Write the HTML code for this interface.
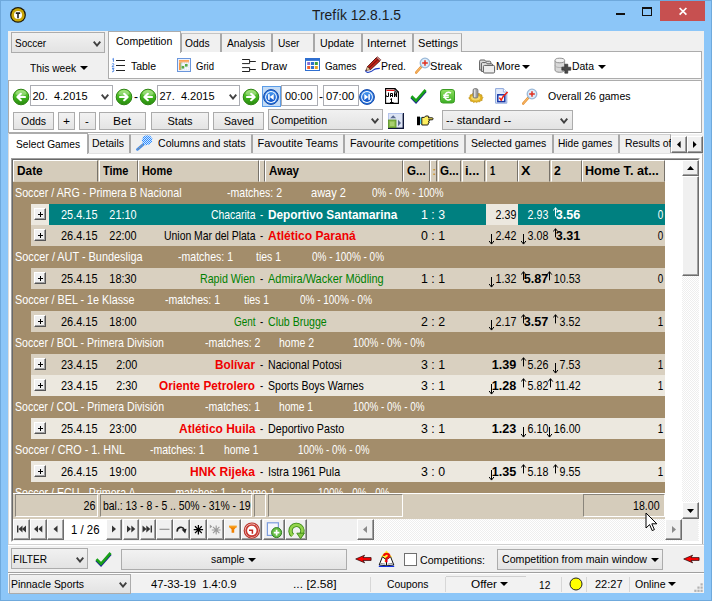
<!DOCTYPE html>
<html><head><meta charset="utf-8"><title>Trefik</title>
<style>
html,body{margin:0;padding:0;}
body{width:712px;height:601px;overflow:hidden;position:relative;background:#8cc6f8;font-family:"Liberation Sans",sans-serif;font-size:11px;}
div{position:absolute;box-sizing:border-box;}
.t{white-space:pre;}
.btn{background:linear-gradient(#f2f2f2,#e4e4e4);border:1px solid #acacac;}
.cmb{background:linear-gradient(#f1f1f1,#e3e3e3);border:1px solid #acacac;}
.wbox{background:#fff;border:1px solid #abadb3;}
.tab{background:#f0f0f0;border:1px solid #d0d0d0;border-bottom:none;}
.hc{background:#d5ccbb;border-left:1px solid #fff;border-top:1px solid #fff;border-right:1px solid #77726a;border-bottom:1px solid #cfc5b2;}
.fc{background:#d5ccbb;border-left:1px solid #8a857b;border-top:1px solid #8a857b;border-right:1px solid #fff;border-bottom:1px solid #fff;}
.nb{background:#f0f0f0;border-left:1px solid #fff;border-top:1px solid #fff;border-right:1px solid #6d6d6d;border-bottom:1px solid #6d6d6d;box-shadow:inset -1px -1px 0 #a0a0a0;}
.pm{background:#f0f0f0;border-left:1px solid #fff;border-top:1px solid #fff;border-right:1px solid #555;border-bottom:1px solid #555;box-shadow:inset -1px -1px 0 #a0a0a0;}
</style></head><body>
<div style="left:0px;top:0px;width:712px;height:601px;background:#8cc6f8;border:1px solid #6fa9dc;"></div>
<div style="left:8px;top:31px;width:696px;height:562px;background:#f0f0f0;"></div>
<div class="t" style="top:7.29px;font-size:15px;line-height:16.75px;color:#1c1c1c;white-space:pre;left:312px;transform-origin:0 50%;transform:scaleX(0.9254);">Trefík 12.8.1.5</div>
<svg style="position:absolute;left:9px;top:6px" width="18" height="18" viewBox="0 0 18 18"><circle cx="9" cy="8.9" r="7.9" fill="#1a1608"/><circle cx="9" cy="8.9" r="6.7" fill="#ccaa08"/><circle cx="9" cy="8.9" r="5.4" fill="#c09c08" opacity=".5"/><circle cx="9" cy="8.9" r="4" fill="#fff"/><path d="M6.8 6.2h4.4v1.7h-1.4v4.4h-1.6v-4.4h-1.4z" fill="#222"/></svg>
<div style="left:660px;top:1px;width:45px;height:20px;background:#c75050;"></div>
<svg style="position:absolute;left:678px;top:6px" width="10" height="10" viewBox="0 0 10 10"><path d="M1.6 2l6.8 6.6M8.4 2l-6.8 6.6" stroke="#fff" stroke-width="1.7" fill="none"/></svg>
<div style="left:616px;top:13px;width:9px;height:2px;background:#111;"></div>
<div style="left:642px;top:7px;width:10px;height:9px;border:1px solid #111;border-top:2px solid #111;"></div>
<div class="cmb" style="left:11px;top:32px;width:94px;height:21px"></div>
<div class="t" style="top:36.98px;font-size:11px;line-height:12.29px;color:#000;white-space:pre;left:14.5px;transform-origin:0 50%;transform:scaleX(0.9114);">Soccer</div>
<svg style="position:absolute;left:93px;top:40.5px" width="8" height="6" viewBox="0 0 8 6"><path d="M0.7 0.7L4 4.6L7.3 0.7" stroke="#404040" stroke-width="1.9" fill="none"/></svg>
<div class="t" style="top:62.28px;font-size:11px;line-height:12.29px;color:#000;white-space:pre;left:30px;transform-origin:0 50%;transform:scaleX(0.9290);">This week</div>
<svg style="position:absolute;left:79.5px;top:66px" width="8" height="4" viewBox="0 0 8 4"><path d="M0 0h8L4 4z" fill="#000"/></svg>
<div style="left:108px;top:51px;width:594px;height:28px;background:#fff;border:1px solid #acacac"></div>
<div class="tab" style="left:181px;top:33px;width:40px;height:18.5px;border-color:#c4c4c4 #a8a8a8"></div>
<div class="t" style="top:36.98px;font-size:11px;line-height:12.29px;color:#000;white-space:pre;left:184.5px;transform-origin:0 50%;transform:scaleX(0.9319);">Odds</div>
<div class="tab" style="left:221px;top:33px;width:50.5px;height:18.5px;border-color:#c4c4c4 #a8a8a8"></div>
<div class="t" style="top:36.98px;font-size:11px;line-height:12.29px;color:#000;white-space:pre;left:226.75px;transform-origin:0 50%;transform:scaleX(0.9338);">Analysis</div>
<div class="tab" style="left:271.5px;top:33px;width:42.5px;height:18.5px;border-color:#c4c4c4 #a8a8a8"></div>
<div class="t" style="top:36.98px;font-size:11px;line-height:12.29px;color:#000;white-space:pre;left:277.5px;transform-origin:0 50%;transform:scaleX(0.9257);">User</div>
<div class="tab" style="left:314px;top:33px;width:47.5px;height:18.5px;border-color:#c4c4c4 #a8a8a8"></div>
<div class="t" style="top:36.98px;font-size:11px;line-height:12.29px;color:#000;white-space:pre;left:319.5px;transform-origin:0 50%;transform:scaleX(0.9656);">Update</div>
<div class="tab" style="left:361.5px;top:33px;width:51.5px;height:18.5px;border-color:#c4c4c4 #a8a8a8"></div>
<div class="t" style="top:36.98px;font-size:11px;line-height:12.29px;color:#000;white-space:pre;left:367px;transform-origin:0 50%;transform:scaleX(1.0457);">Internet</div>
<div class="tab" style="left:413px;top:33px;width:49px;height:18.5px;border-color:#c4c4c4 #a8a8a8"></div>
<div class="t" style="top:36.98px;font-size:11px;line-height:12.29px;color:#000;white-space:pre;left:418px;transform-origin:0 50%;transform:scaleX(1.0065);">Settings</div>
<div style="left:108px;top:31px;width:73px;height:22px;background:#fff;border:1px solid #acacac;border-bottom:none"></div>
<div class="t" style="top:34.98px;font-size:11px;line-height:12.29px;color:#000;white-space:pre;left:115.75px;transform-origin:0 50%;transform:scaleX(0.9583);">Competition</div>
<div class="t" style="top:59.98px;font-size:11px;line-height:12.29px;color:#000;white-space:pre;left:130.5px;transform-origin:0 50%;transform:scaleX(0.9507);">Table</div>
<div class="t" style="top:59.98px;font-size:11px;line-height:12.29px;color:#000;white-space:pre;left:195.75px;transform-origin:0 50%;transform:scaleX(0.8662);">Grid</div>
<div class="t" style="top:59.98px;font-size:11px;line-height:12.29px;color:#000;white-space:pre;left:261px;transform-origin:0 50%;transform:scaleX(1.0128);">Draw</div>
<div class="t" style="top:59.98px;font-size:11px;line-height:12.29px;color:#000;white-space:pre;left:324.5px;transform-origin:0 50%;transform:scaleX(0.8885);">Games</div>
<div class="t" style="top:59.98px;font-size:11px;line-height:12.29px;color:#000;white-space:pre;left:380.75px;transform-origin:0 50%;transform:scaleX(0.9510);">Pred.</div>
<div class="t" style="top:59.98px;font-size:11px;line-height:12.29px;color:#000;white-space:pre;left:430px;transform-origin:0 50%;transform:scaleX(1.0066);">Streak</div>
<div class="t" style="top:59.98px;font-size:11px;line-height:12.29px;color:#000;white-space:pre;left:495.5px;transform-origin:0 50%;transform:scaleX(0.9576);">More</div>
<div class="t" style="top:59.98px;font-size:11px;line-height:12.29px;color:#000;white-space:pre;left:571.75px;transform-origin:0 50%;transform:scaleX(0.9469);">Data</div>
<svg style="position:absolute;left:522px;top:64.5px" width="8" height="4" viewBox="0 0 8 4"><path d="M0 0h8L4 4z" fill="#000"/></svg>
<svg style="position:absolute;left:597.5px;top:64.5px" width="8" height="4" viewBox="0 0 8 4"><path d="M0 0h8L4 4z" fill="#000"/></svg>
<div style="left:8px;top:80px;width:694px;height:53px;background:#fff;border:1px solid #acacac"></div>
<div class="wbox" style="left:30px;top:85px;width:82.5px;height:21px"></div>
<div class="t" style="top:90.48px;font-size:11px;line-height:12.29px;color:#000;white-space:pre;left:32.5px;transform-origin:0 50%;">20.  4.2015</div>
<svg style="position:absolute;left:101px;top:94px" width="8" height="6" viewBox="0 0 8 6"><path d="M0.7 0.7L4 4.6L7.3 0.7" stroke="#444" stroke-width="1.9" fill="none"/></svg>
<div class="wbox" style="left:157px;top:85px;width:83px;height:21px"></div>
<div class="t" style="top:90.48px;font-size:11px;line-height:12.29px;color:#000;white-space:pre;left:159.5px;transform-origin:0 50%;">27.  4.2015</div>
<svg style="position:absolute;left:229px;top:94px" width="8" height="6" viewBox="0 0 8 6"><path d="M0.7 0.7L4 4.6L7.3 0.7" stroke="#444" stroke-width="1.9" fill="none"/></svg>
<div class="t" style="top:90.94px;font-size:12px;line-height:13.40px;color:#000;white-space:pre;left:134px;transform-origin:0 50%;">-</div>
<div class="wbox" style="left:281px;top:85px;width:36.5px;height:21px"></div>
<div class="t" style="top:90.48px;font-size:11px;line-height:12.29px;color:#000;white-space:pre;left:285px;transform-origin:0 50%;">00:00</div>
<div class="t" style="top:90.94px;font-size:12px;line-height:13.40px;color:#000;white-space:pre;left:319px;transform-origin:0 50%;">-</div>
<div class="wbox" style="left:322.5px;top:85px;width:36.5px;height:21px"></div>
<div class="t" style="top:90.48px;font-size:11px;line-height:12.29px;color:#000;white-space:pre;left:325.5px;transform-origin:0 50%;transform:scaleX(1.0264);">07:00</div>
<div class="t" style="top:89.98px;font-size:11px;line-height:12.29px;color:#000;white-space:pre;left:547.75px;transform-origin:0 50%;transform:scaleX(0.9570);">Overall 26 games</div>
<div class="btn" style="left:12.5px;top:111.5px;width:41.0px;height:18.5px"></div>
<div class="t" style="top:115.28px;font-size:11px;line-height:12.29px;color:#000;white-space:pre;left:20.5px;transform-origin:0 50%;transform:scaleX(0.9510);">Odds</div>
<div class="btn" style="left:57.5px;top:111.5px;width:17.0px;height:18.5px"></div>
<div class="t" style="top:115.28px;font-size:11px;line-height:12.29px;color:#000;white-space:pre;left:62.5px;transform-origin:0 50%;transform:scaleX(1.0894);">+</div>
<div class="btn" style="left:78.5px;top:111.5px;width:17.0px;height:18.5px"></div>
<div class="t" style="top:115.28px;font-size:11px;line-height:12.29px;color:#000;white-space:pre;left:84.8px;transform-origin:0 50%;transform:scaleX(1.0371);">-</div>
<div class="btn" style="left:98.5px;top:111.5px;width:47.5px;height:18.5px"></div>
<div class="t" style="top:115.28px;font-size:11px;line-height:12.29px;color:#000;white-space:pre;left:113px;transform-origin:0 50%;transform:scaleX(1.0904);">Bet</div>
<div class="btn" style="left:151px;top:111.5px;width:58px;height:18.5px"></div>
<div class="t" style="top:115.28px;font-size:11px;line-height:12.29px;color:#000;white-space:pre;left:167.5px;transform-origin:0 50%;">Stats</div>
<div class="btn" style="left:213px;top:111.5px;width:50.5px;height:18.5px"></div>
<div class="t" style="top:115.28px;font-size:11px;line-height:12.29px;color:#000;white-space:pre;left:223.75px;transform-origin:0 50%;transform:scaleX(0.9619);">Saved</div>
<div class="cmb" style="left:267.5px;top:109px;width:115px;height:20.5px"></div>
<div class="t" style="top:114.18px;font-size:11px;line-height:12.29px;color:#000;white-space:pre;left:270.5px;transform-origin:0 50%;transform:scaleX(0.9541);">Competition</div>
<svg style="position:absolute;left:371px;top:117.5px" width="8" height="6" viewBox="0 0 8 6"><path d="M0.7 0.7L4 4.6L7.3 0.7" stroke="#404040" stroke-width="1.9" fill="none"/></svg>
<div class="cmb" style="left:442px;top:109.5px;width:130.5px;height:20px"></div>
<div class="t" style="top:114.18px;font-size:11px;line-height:12.29px;color:#000;white-space:pre;left:445.75px;transform-origin:0 50%;transform:scaleX(1.0264);">-- standard --</div>
<svg style="position:absolute;left:560px;top:117.5px" width="8" height="6" viewBox="0 0 8 6"><path d="M0.7 0.7L4 4.6L7.3 0.7" stroke="#404040" stroke-width="1.9" fill="none"/></svg>
<div class="tab" style="left:88px;top:134px;width:42px;height:19px;border-color:#cfcfcf #a8a8a8"></div>
<div class="t" style="top:136.98px;font-size:11px;line-height:12.29px;color:#000;white-space:pre;left:92px;transform-origin:0 50%;transform:scaleX(0.9517);">Details</div>
<div class="tab" style="left:130px;top:134px;width:121.5px;height:19px;border-color:#cfcfcf #a8a8a8"></div>
<div class="t" style="top:136.98px;font-size:11px;line-height:12.29px;color:#000;white-space:pre;left:157.5px;transform-origin:0 50%;transform:scaleX(0.9605);">Columns and stats</div>
<div class="tab" style="left:251.5px;top:134px;width:92.5px;height:19px;border-color:#cfcfcf #a8a8a8"></div>
<div class="t" style="top:136.98px;font-size:11px;line-height:12.29px;color:#000;white-space:pre;left:257.5px;transform-origin:0 50%;">Favoutite Teams</div>
<div class="tab" style="left:344px;top:134px;width:120.75px;height:19px;border-color:#cfcfcf #a8a8a8"></div>
<div class="t" style="top:136.98px;font-size:11px;line-height:12.29px;color:#000;white-space:pre;left:349.5px;transform-origin:0 50%;transform:scaleX(0.9828);">Favourite competitions</div>
<div class="tab" style="left:464.75px;top:134px;width:87.75px;height:19px;border-color:#cfcfcf #a8a8a8"></div>
<div class="t" style="top:136.98px;font-size:11px;line-height:12.29px;color:#000;white-space:pre;left:470.75px;transform-origin:0 50%;transform:scaleX(0.9540);">Selected games</div>
<div class="tab" style="left:552.5px;top:134px;width:66.75px;height:19px;border-color:#cfcfcf #a8a8a8"></div>
<div class="t" style="top:136.98px;font-size:11px;line-height:12.29px;color:#000;white-space:pre;left:557.75px;transform-origin:0 50%;transform:scaleX(0.9243);">Hide games</div>
<div class="tab" style="left:619.25px;top:134px;width:51.75px;height:19px;border-color:#cfcfcf #a8a8a8"></div>
<div style="left:619.5px;top:135px;width:51.5px;height:18px;overflow:hidden">
<div class="t" style="top:1.98px;font-size:11px;line-height:12.29px;color:#000;white-space:pre;left:5px;transform-origin:0 50%;transform:scaleX(0.9508);">Results of</div>
</div>
<div style="left:88px;top:133px;width:614px;height:1.2px;background:#fff;"></div>
<div style="left:8px;top:153px;width:695px;height:392px;background:#fff;border:1px solid #acacac;border-left:none;border-top-color:#e2e2e2"></div>
<div style="left:8px;top:133px;width:80px;height:21px;background:#fff;border:1px solid #acacac;border-bottom:none;border-left:none"></div>
<div class="t" style="top:138.48px;font-size:11px;line-height:12.29px;color:#000;white-space:pre;left:15.5px;transform-origin:0 50%;transform:scaleX(0.9265);">Select Games</div>
<div style="left:8px;top:133px;width:1px;height:412px;background:#dcdcdc;"></div>
<div class="nb" style="left:671px;top:136px;width:16px;height:17px"></div>
<div class="nb" style="left:687px;top:136px;width:16px;height:17px"></div>
<svg style="position:absolute;left:677.3px;top:141px" width="4" height="7" viewBox="0 0 4 7"><path d="M3.6 0v7L0 3.5z" fill="#000"/></svg>
<svg style="position:absolute;left:693.3px;top:141px" width="4" height="7" viewBox="0 0 4 7"><path d="M0 0v7L3.6 3.5z" fill="#000"/></svg>
<div style="left:11px;top:158px;width:689px;height:384px;background:#fff;border:1px solid #a0a0a0;border-right-color:#fff;border-bottom-color:#fff"></div>
<div style="left:12px;top:159px;width:687px;height:382px;background:#fff;border:1px solid #696969;border-right-color:#e3e3e3;border-bottom-color:#e3e3e3"></div>
<div style="left:13px;top:160px;width:652px;height:334px;background:#a38d6b;"></div>
<div style="left:13px;top:160px;width:652px;height:21.5px;background:#d5ccbb;"></div>
<div class="hc" style="left:13px;top:160px;width:85px;height:21.5px"></div>
<div class="hc" style="left:98.5px;top:160px;width:39.0px;height:21.5px"></div>
<div class="hc" style="left:138px;top:160px;width:120.5px;height:21.5px"></div>
<div class="hc" style="left:259px;top:160px;width:5.5px;height:21.5px"></div>
<div class="hc" style="left:265px;top:160px;width:137.5px;height:21.5px"></div>
<div class="hc" style="left:403px;top:160px;width:26.5px;height:21.5px"></div>
<div class="hc" style="left:430px;top:160px;width:7px;height:21.5px"></div>
<div class="hc" style="left:437.5px;top:160px;width:23.5px;height:21.5px"></div>
<div class="hc" style="left:461.5px;top:160px;width:23.5px;height:21.5px"></div>
<div class="hc" style="left:485.5px;top:160px;width:32.0px;height:21.5px"></div>
<div class="hc" style="left:518px;top:160px;width:32px;height:21.5px"></div>
<div class="hc" style="left:550.5px;top:160px;width:31.0px;height:21.5px"></div>
<div class="hc" style="left:582px;top:160px;width:83px;height:21.5px"></div>
<div class="t" style="top:164.74px;font-size:12px;line-height:13.40px;color:#000;white-space:pre;font-weight:bold;left:16.7px;transform-origin:0 50%;transform:scaleX(0.9879);">Date</div>
<div class="t" style="top:164.74px;font-size:12px;line-height:13.40px;color:#000;white-space:pre;font-weight:bold;left:102.8px;transform-origin:0 50%;transform:scaleX(0.9136);">Time</div>
<div class="t" style="top:164.74px;font-size:12px;line-height:13.40px;color:#000;white-space:pre;font-weight:bold;left:142px;transform-origin:0 50%;transform:scaleX(0.9086);">Home</div>
<div class="t" style="top:164.74px;font-size:12px;line-height:13.40px;color:#000;white-space:pre;font-weight:bold;left:268.5px;transform-origin:0 50%;transform:scaleX(0.9634);">Away</div>
<div class="t" style="top:164.74px;font-size:12px;line-height:13.40px;color:#000;white-space:pre;font-weight:bold;left:407.2px;transform-origin:0 50%;transform:scaleX(0.9667);">G...</div>
<div class="t" style="top:164.98px;font-size:11px;line-height:12.29px;color:#c89030;white-space:pre;font-weight:bold;left:432.5px;transform-origin:0 50%;">:</div>
<div class="t" style="top:164.74px;font-size:12px;line-height:13.40px;color:#000;white-space:pre;font-weight:bold;left:440.2px;transform-origin:0 50%;transform:scaleX(0.9667);">G...</div>
<div class="t" style="top:164.74px;font-size:12px;line-height:13.40px;color:#000;white-space:pre;font-weight:bold;left:465.2px;transform-origin:0 50%;transform:scaleX(1.0792);">i...</div>
<div class="t" style="top:164.74px;font-size:12px;line-height:13.40px;color:#000;white-space:pre;font-weight:bold;left:490.4px;transform-origin:0 50%;transform:scaleX(0.7789);">1</div>
<div class="t" style="top:164.74px;font-size:12px;line-height:13.40px;color:#000;white-space:pre;font-weight:bold;left:520.9px;transform-origin:0 50%;transform:scaleX(1.1744);">X</div>
<div class="t" style="top:164.74px;font-size:12px;line-height:13.40px;color:#000;white-space:pre;font-weight:bold;left:553.5px;transform-origin:0 50%;transform:scaleX(1.0186);">2</div>
<div class="t" style="top:164.74px;font-size:12px;line-height:13.40px;color:#000;white-space:pre;font-weight:bold;left:585.3px;transform-origin:0 50%;transform:scaleX(1.0523);">Home T. at...</div>
<div class="t" style="top:186.39px;font-size:13px;line-height:14.52px;color:#ffffff;white-space:pre;left:15px;transform-origin:0 50%;transform:scaleX(0.8231);">Soccer / ARG - Primera B Nacional</div>
<div class="t" style="top:186.39px;font-size:13px;line-height:14.52px;color:#ffffff;white-space:pre;left:226.5px;transform-origin:0 50%;transform:scaleX(0.8098);">-matches: 2</div>
<div class="t" style="top:186.39px;font-size:13px;line-height:14.52px;color:#ffffff;white-space:pre;left:311px;transform-origin:0 50%;transform:scaleX(0.8497);">away 2</div>
<div class="t" style="top:186.39px;font-size:13px;line-height:14.52px;color:#ffffff;white-space:pre;left:372px;transform-origin:0 50%;transform:scaleX(0.7611);">0% - 0% - 100%</div>
<div style="left:31px;top:204px;width:634px;height:21px;background:#d9d0c0;"></div>
<div style="left:31px;top:204px;width:18px;height:21px;background:#ece8df;"></div>
<div style="left:49px;top:204px;width:616px;height:21px;background:#008080;"></div>
<div style="left:486px;top:204px;width:32px;height:21px;background:#ece8df;"></div>
<div class="pm" style="left:34px;top:208px;width:12px;height:12px"></div>
<div style="left:37.5px;top:213.5px;width:5px;height:1px;background:#000;"></div>
<div style="left:39.5px;top:211.5px;width:1px;height:5px;background:#000;"></div>
<div class="t" style="top:208.39px;font-size:13px;line-height:14.52px;color:#fff;white-space:pre;left:61px;transform-origin:0 50%;transform:scaleX(0.8414);">25.4.15</div>
<div class="t" style="top:208.39px;font-size:13px;line-height:14.52px;color:#fff;white-space:pre;right:575.2px;transform-origin:100% 50%;transform:scaleX(0.8350);">21:10</div>
<div class="t" style="top:208.39px;font-size:13px;line-height:14.52px;color:#fff;white-space:pre;left:210.5px;transform-origin:0 50%;transform:scaleX(0.7998);">Chacarita</div>
<div class="t" style="top:208.39px;font-size:13px;line-height:14.52px;color:#fff;white-space:pre;left:259.6px;transform-origin:0 50%;transform:scaleX(0.7394);">-</div>
<div class="t" style="top:208.39px;font-size:13px;line-height:14.52px;color:#fff;white-space:pre;font-weight:bold;left:267.8px;transform-origin:0 50%;transform:scaleX(0.9078);">Deportivo Santamarina</div>
<div class="t" style="top:208.39px;font-size:13px;line-height:14.52px;color:#fff;white-space:pre;left:421px;transform-origin:0 50%;transform:scaleX(0.9486);">1 : 3</div>
<div class="t" style="top:208.39px;font-size:13px;line-height:14.52px;color:#000;white-space:pre;right:195.5px;transform-origin:100% 50%;transform:scaleX(0.8200);">2.39</div>
<div class="t" style="top:208.39px;font-size:13px;line-height:14.52px;color:#fff;white-space:pre;right:164px;transform-origin:100% 50%;transform:scaleX(0.8200);">2.93</div>
<div class="t" style="top:208.39px;font-size:13px;line-height:14.52px;color:#fff;white-space:pre;font-weight:bold;right:131.5px;transform-origin:100% 50%;transform:scaleX(0.9700);">3.56</div>
<svg style="position:absolute;left:553px;top:207px" width="6" height="10" viewBox="0 0 6 10"><path d="M2.5 9.4V0.8M0.2 3.6L2.5 0.7L4.8 3.6" stroke="#fff" stroke-width="1" fill="none"/></svg>
<div class="t" style="top:208.39px;font-size:13px;line-height:14.52px;color:#fff;white-space:pre;right:49.200000000000045px;transform-origin:100% 50%;transform:scaleX(0.7607);">0</div>
<div style="left:31px;top:225px;width:634px;height:21px;background:#d9d0c0;"></div>
<div class="pm" style="left:34px;top:229px;width:12px;height:12px"></div>
<div style="left:37.5px;top:234.5px;width:5px;height:1px;background:#000;"></div>
<div style="left:39.5px;top:232.5px;width:1px;height:5px;background:#000;"></div>
<div class="t" style="top:229.39px;font-size:13px;line-height:14.52px;color:#000;white-space:pre;left:61px;transform-origin:0 50%;transform:scaleX(0.8414);">26.4.15</div>
<div class="t" style="top:229.39px;font-size:13px;line-height:14.52px;color:#000;white-space:pre;right:575.2px;transform-origin:100% 50%;transform:scaleX(0.8350);">22:00</div>
<div class="t" style="top:229.39px;font-size:13px;line-height:14.52px;color:#000;white-space:pre;left:163.5px;transform-origin:0 50%;transform:scaleX(0.8014);">Union Mar del Plata</div>
<div class="t" style="top:229.39px;font-size:13px;line-height:14.52px;color:#000;white-space:pre;left:259.6px;transform-origin:0 50%;transform:scaleX(0.7394);">-</div>
<div class="t" style="top:229.39px;font-size:13px;line-height:14.52px;color:#f00000;white-space:pre;font-weight:bold;left:267.8px;transform-origin:0 50%;transform:scaleX(0.9266);">Atlético Paraná</div>
<div class="t" style="top:229.39px;font-size:13px;line-height:14.52px;color:#000;white-space:pre;left:421px;transform-origin:0 50%;transform:scaleX(0.9486);">0 : 1</div>
<div class="t" style="top:229.39px;font-size:13px;line-height:14.52px;color:#000;white-space:pre;right:195.5px;transform-origin:100% 50%;transform:scaleX(0.8200);">2.42</div>
<svg style="position:absolute;left:489px;top:234px" width="6" height="11" viewBox="0 0 6 11"><path d="M2.5 0V9.8M0.1 7L2.5 10.1L4.9 7" stroke="#000" stroke-width="1" fill="none"/></svg>
<div class="t" style="top:229.39px;font-size:13px;line-height:14.52px;color:#000;white-space:pre;right:164px;transform-origin:100% 50%;transform:scaleX(0.8200);">3.08</div>
<svg style="position:absolute;left:521px;top:234px" width="6" height="11" viewBox="0 0 6 11"><path d="M2.5 0V9.8M0.1 7L2.5 10.1L4.9 7" stroke="#000" stroke-width="1" fill="none"/></svg>
<div class="t" style="top:229.39px;font-size:13px;line-height:14.52px;color:#000;white-space:pre;font-weight:bold;right:131.5px;transform-origin:100% 50%;transform:scaleX(0.9700);">3.31</div>
<svg style="position:absolute;left:553px;top:228px" width="6" height="10" viewBox="0 0 6 10"><path d="M2.5 9.4V0.8M0.2 3.6L2.5 0.7L4.8 3.6" stroke="#000" stroke-width="1" fill="none"/></svg>
<div class="t" style="top:229.39px;font-size:13px;line-height:14.52px;color:#000;white-space:pre;right:49.200000000000045px;transform-origin:100% 50%;transform:scaleX(0.7607);">0</div>
<div class="t" style="top:250.39px;font-size:13px;line-height:14.52px;color:#ffffff;white-space:pre;left:15px;transform-origin:0 50%;transform:scaleX(0.8375);">Soccer / AUT - Bundesliga</div>
<div class="t" style="top:250.39px;font-size:13px;line-height:14.52px;color:#ffffff;white-space:pre;left:177.5px;transform-origin:0 50%;transform:scaleX(0.8098);">-matches: 1</div>
<div class="t" style="top:250.39px;font-size:13px;line-height:14.52px;color:#ffffff;white-space:pre;left:256px;transform-origin:0 50%;transform:scaleX(0.8045);">ties 1</div>
<div class="t" style="top:250.39px;font-size:13px;line-height:14.52px;color:#ffffff;white-space:pre;left:311.5px;transform-origin:0 50%;transform:scaleX(0.7665);">0% - 100% - 0%</div>
<div style="left:31px;top:268px;width:634px;height:21px;background:#d9d0c0;"></div>
<div class="pm" style="left:34px;top:272px;width:12px;height:12px"></div>
<div style="left:37.5px;top:277.5px;width:5px;height:1px;background:#000;"></div>
<div style="left:39.5px;top:275.5px;width:1px;height:5px;background:#000;"></div>
<div class="t" style="top:272.39px;font-size:13px;line-height:14.52px;color:#000;white-space:pre;left:61px;transform-origin:0 50%;transform:scaleX(0.8414);">25.4.15</div>
<div class="t" style="top:272.39px;font-size:13px;line-height:14.52px;color:#000;white-space:pre;right:575.2px;transform-origin:100% 50%;transform:scaleX(0.8350);">18:30</div>
<div class="t" style="top:272.39px;font-size:13px;line-height:14.52px;color:#008000;white-space:pre;left:200px;transform-origin:0 50%;transform:scaleX(0.8185);">Rapid Wien</div>
<div class="t" style="top:272.39px;font-size:13px;line-height:14.52px;color:#000;white-space:pre;left:259.6px;transform-origin:0 50%;transform:scaleX(0.7394);">-</div>
<div class="t" style="top:272.39px;font-size:13px;line-height:14.52px;color:#008000;white-space:pre;left:267.8px;transform-origin:0 50%;transform:scaleX(0.8414);">Admira/Wacker Mödling</div>
<div class="t" style="top:272.39px;font-size:13px;line-height:14.52px;color:#000;white-space:pre;left:421px;transform-origin:0 50%;transform:scaleX(0.9486);">1 : 1</div>
<div class="t" style="top:272.39px;font-size:13px;line-height:14.52px;color:#000;white-space:pre;right:195.5px;transform-origin:100% 50%;transform:scaleX(0.8200);">1.32</div>
<svg style="position:absolute;left:489px;top:277px" width="6" height="11" viewBox="0 0 6 11"><path d="M2.5 0V9.8M0.1 7L2.5 10.1L4.9 7" stroke="#000" stroke-width="1" fill="none"/></svg>
<div class="t" style="top:272.39px;font-size:13px;line-height:14.52px;color:#000;white-space:pre;font-weight:bold;right:164px;transform-origin:100% 50%;transform:scaleX(0.9700);">5.87</div>
<svg style="position:absolute;left:521px;top:271px" width="6" height="10" viewBox="0 0 6 10"><path d="M2.5 9.4V0.8M0.2 3.6L2.5 0.7L4.8 3.6" stroke="#000" stroke-width="1" fill="none"/></svg>
<div class="t" style="top:272.39px;font-size:13px;line-height:14.52px;color:#000;white-space:pre;right:131.5px;transform-origin:100% 50%;transform:scaleX(0.8200);">10.53</div>
<svg style="position:absolute;left:547px;top:271px" width="6" height="10" viewBox="0 0 6 10"><path d="M2.5 9.4V0.8M0.2 3.6L2.5 0.7L4.8 3.6" stroke="#000" stroke-width="1" fill="none"/></svg>
<div class="t" style="top:272.39px;font-size:13px;line-height:14.52px;color:#000;white-space:pre;right:49.200000000000045px;transform-origin:100% 50%;transform:scaleX(0.7607);">0</div>
<div class="t" style="top:293.39px;font-size:13px;line-height:14.52px;color:#ffffff;white-space:pre;left:15px;transform-origin:0 50%;transform:scaleX(0.8296);">Soccer / BEL - 1e Klasse</div>
<div class="t" style="top:293.39px;font-size:13px;line-height:14.52px;color:#ffffff;white-space:pre;left:165px;transform-origin:0 50%;transform:scaleX(0.8098);">-matches: 1</div>
<div class="t" style="top:293.39px;font-size:13px;line-height:14.52px;color:#ffffff;white-space:pre;left:244px;transform-origin:0 50%;transform:scaleX(0.8045);">ties 1</div>
<div class="t" style="top:293.39px;font-size:13px;line-height:14.52px;color:#ffffff;white-space:pre;left:300px;transform-origin:0 50%;transform:scaleX(0.7665);">0% - 100% - 0%</div>
<div style="left:31px;top:311px;width:634px;height:21px;background:#d9d0c0;"></div>
<div class="pm" style="left:34px;top:315px;width:12px;height:12px"></div>
<div style="left:37.5px;top:320.5px;width:5px;height:1px;background:#000;"></div>
<div style="left:39.5px;top:318.5px;width:1px;height:5px;background:#000;"></div>
<div class="t" style="top:315.39px;font-size:13px;line-height:14.52px;color:#000;white-space:pre;left:61px;transform-origin:0 50%;transform:scaleX(0.8414);">26.4.15</div>
<div class="t" style="top:315.39px;font-size:13px;line-height:14.52px;color:#000;white-space:pre;right:575.2px;transform-origin:100% 50%;transform:scaleX(0.8350);">18:00</div>
<div class="t" style="top:315.39px;font-size:13px;line-height:14.52px;color:#008000;white-space:pre;left:233.5px;transform-origin:0 50%;transform:scaleX(0.7627);">Gent</div>
<div class="t" style="top:315.39px;font-size:13px;line-height:14.52px;color:#000;white-space:pre;left:259.6px;transform-origin:0 50%;transform:scaleX(0.7394);">-</div>
<div class="t" style="top:315.39px;font-size:13px;line-height:14.52px;color:#008000;white-space:pre;left:267.8px;transform-origin:0 50%;transform:scaleX(0.8122);">Club Brugge</div>
<div class="t" style="top:315.39px;font-size:13px;line-height:14.52px;color:#000;white-space:pre;left:421px;transform-origin:0 50%;transform:scaleX(0.9486);">2 : 2</div>
<div class="t" style="top:315.39px;font-size:13px;line-height:14.52px;color:#000;white-space:pre;right:195.5px;transform-origin:100% 50%;transform:scaleX(0.8200);">2.17</div>
<svg style="position:absolute;left:489px;top:320px" width="6" height="11" viewBox="0 0 6 11"><path d="M2.5 0V9.8M0.1 7L2.5 10.1L4.9 7" stroke="#000" stroke-width="1" fill="none"/></svg>
<div class="t" style="top:315.39px;font-size:13px;line-height:14.52px;color:#000;white-space:pre;font-weight:bold;right:164px;transform-origin:100% 50%;transform:scaleX(0.9700);">3.57</div>
<svg style="position:absolute;left:521px;top:314px" width="6" height="10" viewBox="0 0 6 10"><path d="M2.5 9.4V0.8M0.2 3.6L2.5 0.7L4.8 3.6" stroke="#000" stroke-width="1" fill="none"/></svg>
<div class="t" style="top:315.39px;font-size:13px;line-height:14.52px;color:#000;white-space:pre;right:131.5px;transform-origin:100% 50%;transform:scaleX(0.8200);">3.52</div>
<svg style="position:absolute;left:553px;top:314px" width="6" height="10" viewBox="0 0 6 10"><path d="M2.5 9.4V0.8M0.2 3.6L2.5 0.7L4.8 3.6" stroke="#000" stroke-width="1" fill="none"/></svg>
<div class="t" style="top:315.39px;font-size:13px;line-height:14.52px;color:#000;white-space:pre;right:49.200000000000045px;transform-origin:100% 50%;transform:scaleX(0.7607);">1</div>
<div class="t" style="top:336.39px;font-size:13px;line-height:14.52px;color:#ffffff;white-space:pre;left:15px;transform-origin:0 50%;transform:scaleX(0.8141);">Soccer / BOL - Primera Division</div>
<div class="t" style="top:336.39px;font-size:13px;line-height:14.52px;color:#ffffff;white-space:pre;left:205px;transform-origin:0 50%;transform:scaleX(0.8172);">-matches: 2</div>
<div class="t" style="top:336.39px;font-size:13px;line-height:14.52px;color:#ffffff;white-space:pre;left:278.5px;transform-origin:0 50%;transform:scaleX(0.8071);">home 2</div>
<div class="t" style="top:336.39px;font-size:13px;line-height:14.52px;color:#ffffff;white-space:pre;left:353px;transform-origin:0 50%;transform:scaleX(0.7611);">100% - 0% - 0%</div>
<div style="left:31px;top:354px;width:634px;height:21px;background:#d9d0c0;"></div>
<div class="pm" style="left:34px;top:358px;width:12px;height:12px"></div>
<div style="left:37.5px;top:363.5px;width:5px;height:1px;background:#000;"></div>
<div style="left:39.5px;top:361.5px;width:1px;height:5px;background:#000;"></div>
<div class="t" style="top:358.39px;font-size:13px;line-height:14.52px;color:#000;white-space:pre;left:61px;transform-origin:0 50%;transform:scaleX(0.8414);">23.4.15</div>
<div class="t" style="top:358.39px;font-size:13px;line-height:14.52px;color:#000;white-space:pre;right:575.2px;transform-origin:100% 50%;transform:scaleX(0.8350);">2:00</div>
<div class="t" style="top:358.39px;font-size:13px;line-height:14.52px;color:#f00000;white-space:pre;font-weight:bold;left:215px;transform-origin:0 50%;transform:scaleX(0.9076);">Bolívar</div>
<div class="t" style="top:358.39px;font-size:13px;line-height:14.52px;color:#000;white-space:pre;left:259.6px;transform-origin:0 50%;transform:scaleX(0.7394);">-</div>
<div class="t" style="top:358.39px;font-size:13px;line-height:14.52px;color:#000;white-space:pre;left:267.8px;transform-origin:0 50%;transform:scaleX(0.8159);">Nacional Potosi</div>
<div class="t" style="top:358.39px;font-size:13px;line-height:14.52px;color:#000;white-space:pre;left:421px;transform-origin:0 50%;transform:scaleX(0.9486);">3 : 1</div>
<div class="t" style="top:358.39px;font-size:13px;line-height:14.52px;color:#000;white-space:pre;font-weight:bold;right:195.5px;transform-origin:100% 50%;transform:scaleX(0.9700);">1.39</div>
<div class="t" style="top:358.39px;font-size:13px;line-height:14.52px;color:#000;white-space:pre;right:164px;transform-origin:100% 50%;transform:scaleX(0.8200);">5.26</div>
<svg style="position:absolute;left:521px;top:357px" width="6" height="10" viewBox="0 0 6 10"><path d="M2.5 9.4V0.8M0.2 3.6L2.5 0.7L4.8 3.6" stroke="#000" stroke-width="1" fill="none"/></svg>
<div class="t" style="top:358.39px;font-size:13px;line-height:14.52px;color:#000;white-space:pre;right:131.5px;transform-origin:100% 50%;transform:scaleX(0.8200);">7.53</div>
<svg style="position:absolute;left:553px;top:363px" width="6" height="11" viewBox="0 0 6 11"><path d="M2.5 0V9.8M0.1 7L2.5 10.1L4.9 7" stroke="#000" stroke-width="1" fill="none"/></svg>
<div class="t" style="top:358.39px;font-size:13px;line-height:14.52px;color:#000;white-space:pre;right:49.200000000000045px;transform-origin:100% 50%;transform:scaleX(0.7607);">1</div>
<div style="left:31px;top:375px;width:634px;height:21px;background:#ece8df;"></div>
<div class="pm" style="left:34px;top:379px;width:12px;height:12px"></div>
<div style="left:37.5px;top:384.5px;width:5px;height:1px;background:#000;"></div>
<div style="left:39.5px;top:382.5px;width:1px;height:5px;background:#000;"></div>
<div class="t" style="top:379.39px;font-size:13px;line-height:14.52px;color:#000;white-space:pre;left:61px;transform-origin:0 50%;transform:scaleX(0.8414);">23.4.15</div>
<div class="t" style="top:379.39px;font-size:13px;line-height:14.52px;color:#000;white-space:pre;right:575.2px;transform-origin:100% 50%;transform:scaleX(0.8350);">2:30</div>
<div class="t" style="top:379.39px;font-size:13px;line-height:14.52px;color:#f00000;white-space:pre;font-weight:bold;left:159px;transform-origin:0 50%;transform:scaleX(0.9039);">Oriente Petrolero</div>
<div class="t" style="top:379.39px;font-size:13px;line-height:14.52px;color:#000;white-space:pre;left:259.6px;transform-origin:0 50%;transform:scaleX(0.7394);">-</div>
<div class="t" style="top:379.39px;font-size:13px;line-height:14.52px;color:#000;white-space:pre;left:267.8px;transform-origin:0 50%;transform:scaleX(0.8109);">Sports Boys Warnes</div>
<div class="t" style="top:379.39px;font-size:13px;line-height:14.52px;color:#000;white-space:pre;left:421px;transform-origin:0 50%;transform:scaleX(0.9486);">3 : 1</div>
<div class="t" style="top:379.39px;font-size:13px;line-height:14.52px;color:#000;white-space:pre;font-weight:bold;right:195.5px;transform-origin:100% 50%;transform:scaleX(0.9700);">1.28</div>
<svg style="position:absolute;left:489px;top:384px" width="6" height="11" viewBox="0 0 6 11"><path d="M2.5 0V9.8M0.1 7L2.5 10.1L4.9 7" stroke="#000" stroke-width="1" fill="none"/></svg>
<div class="t" style="top:379.39px;font-size:13px;line-height:14.52px;color:#000;white-space:pre;right:164px;transform-origin:100% 50%;transform:scaleX(0.8200);">5.82</div>
<svg style="position:absolute;left:521px;top:378px" width="6" height="10" viewBox="0 0 6 10"><path d="M2.5 9.4V0.8M0.2 3.6L2.5 0.7L4.8 3.6" stroke="#000" stroke-width="1" fill="none"/></svg>
<div class="t" style="top:379.39px;font-size:13px;line-height:14.52px;color:#000;white-space:pre;right:131.5px;transform-origin:100% 50%;transform:scaleX(0.8200);">11.42</div>
<svg style="position:absolute;left:548px;top:378px" width="6" height="10" viewBox="0 0 6 10"><path d="M2.5 9.4V0.8M0.2 3.6L2.5 0.7L4.8 3.6" stroke="#000" stroke-width="1" fill="none"/></svg>
<div class="t" style="top:379.39px;font-size:13px;line-height:14.52px;color:#000;white-space:pre;right:49.200000000000045px;transform-origin:100% 50%;transform:scaleX(0.7607);">1</div>
<div class="t" style="top:400.39px;font-size:13px;line-height:14.52px;color:#ffffff;white-space:pre;left:15px;transform-origin:0 50%;transform:scaleX(0.8110);">Soccer / COL - Primera División</div>
<div class="t" style="top:400.39px;font-size:13px;line-height:14.52px;color:#ffffff;white-space:pre;left:205px;transform-origin:0 50%;transform:scaleX(0.8098);">-matches: 1</div>
<div class="t" style="top:400.39px;font-size:13px;line-height:14.52px;color:#ffffff;white-space:pre;left:278.5px;transform-origin:0 50%;transform:scaleX(0.7841);">home 1</div>
<div class="t" style="top:400.39px;font-size:13px;line-height:14.52px;color:#ffffff;white-space:pre;left:353px;transform-origin:0 50%;transform:scaleX(0.7611);">100% - 0% - 0%</div>
<div style="left:31px;top:418px;width:634px;height:21px;background:#ece8df;"></div>
<div class="pm" style="left:34px;top:422px;width:12px;height:12px"></div>
<div style="left:37.5px;top:427.5px;width:5px;height:1px;background:#000;"></div>
<div style="left:39.5px;top:425.5px;width:1px;height:5px;background:#000;"></div>
<div class="t" style="top:422.39px;font-size:13px;line-height:14.52px;color:#000;white-space:pre;left:61px;transform-origin:0 50%;transform:scaleX(0.8414);">25.4.15</div>
<div class="t" style="top:422.39px;font-size:13px;line-height:14.52px;color:#000;white-space:pre;right:575.2px;transform-origin:100% 50%;transform:scaleX(0.8350);">23:00</div>
<div class="t" style="top:422.39px;font-size:13px;line-height:14.52px;color:#f00000;white-space:pre;font-weight:bold;left:178.5px;transform-origin:0 50%;transform:scaleX(0.9209);">Atlético Huila</div>
<div class="t" style="top:422.39px;font-size:13px;line-height:14.52px;color:#000;white-space:pre;left:259.6px;transform-origin:0 50%;transform:scaleX(0.7394);">-</div>
<div class="t" style="top:422.39px;font-size:13px;line-height:14.52px;color:#000;white-space:pre;left:267.8px;transform-origin:0 50%;transform:scaleX(0.8238);">Deportivo Pasto</div>
<div class="t" style="top:422.39px;font-size:13px;line-height:14.52px;color:#000;white-space:pre;left:421px;transform-origin:0 50%;transform:scaleX(0.9486);">3 : 1</div>
<div class="t" style="top:422.39px;font-size:13px;line-height:14.52px;color:#000;white-space:pre;font-weight:bold;right:195.5px;transform-origin:100% 50%;transform:scaleX(0.9700);">1.23</div>
<div class="t" style="top:422.39px;font-size:13px;line-height:14.52px;color:#000;white-space:pre;right:164px;transform-origin:100% 50%;transform:scaleX(0.8200);">6.10</div>
<svg style="position:absolute;left:521px;top:427px" width="6" height="11" viewBox="0 0 6 11"><path d="M2.5 0V9.8M0.1 7L2.5 10.1L4.9 7" stroke="#000" stroke-width="1" fill="none"/></svg>
<div class="t" style="top:422.39px;font-size:13px;line-height:14.52px;color:#000;white-space:pre;right:131.5px;transform-origin:100% 50%;transform:scaleX(0.8200);">16.00</div>
<svg style="position:absolute;left:547px;top:427px" width="6" height="11" viewBox="0 0 6 11"><path d="M2.5 0V9.8M0.1 7L2.5 10.1L4.9 7" stroke="#000" stroke-width="1" fill="none"/></svg>
<div class="t" style="top:422.39px;font-size:13px;line-height:14.52px;color:#000;white-space:pre;right:49.200000000000045px;transform-origin:100% 50%;transform:scaleX(0.7607);">1</div>
<div class="t" style="top:443.39px;font-size:13px;line-height:14.52px;color:#ffffff;white-space:pre;left:15px;transform-origin:0 50%;transform:scaleX(0.8321);">Soccer / CRO - 1. HNL</div>
<div class="t" style="top:443.39px;font-size:13px;line-height:14.52px;color:#ffffff;white-space:pre;left:150.3px;transform-origin:0 50%;transform:scaleX(0.8054);">-matches: 1</div>
<div class="t" style="top:443.39px;font-size:13px;line-height:14.52px;color:#ffffff;white-space:pre;left:223.5px;transform-origin:0 50%;transform:scaleX(0.7956);">home 1</div>
<div class="t" style="top:443.39px;font-size:13px;line-height:14.52px;color:#ffffff;white-space:pre;left:298px;transform-origin:0 50%;transform:scaleX(0.7611);">100% - 0% - 0%</div>
<div style="left:31px;top:461px;width:634px;height:21px;background:#ece8df;"></div>
<div class="pm" style="left:34px;top:465px;width:12px;height:12px"></div>
<div style="left:37.5px;top:470.5px;width:5px;height:1px;background:#000;"></div>
<div style="left:39.5px;top:468.5px;width:1px;height:5px;background:#000;"></div>
<div class="t" style="top:465.39px;font-size:13px;line-height:14.52px;color:#000;white-space:pre;left:61px;transform-origin:0 50%;transform:scaleX(0.8414);">26.4.15</div>
<div class="t" style="top:465.39px;font-size:13px;line-height:14.52px;color:#000;white-space:pre;right:575.2px;transform-origin:100% 50%;transform:scaleX(0.8350);">19:00</div>
<div class="t" style="top:465.39px;font-size:13px;line-height:14.52px;color:#f00000;white-space:pre;font-weight:bold;left:190px;transform-origin:0 50%;transform:scaleX(0.9275);">HNK Rijeka</div>
<div class="t" style="top:465.39px;font-size:13px;line-height:14.52px;color:#000;white-space:pre;left:259.6px;transform-origin:0 50%;transform:scaleX(0.7394);">-</div>
<div class="t" style="top:465.39px;font-size:13px;line-height:14.52px;color:#000;white-space:pre;left:267.8px;transform-origin:0 50%;transform:scaleX(0.8256);">Istra 1961 Pula</div>
<div class="t" style="top:465.39px;font-size:13px;line-height:14.52px;color:#000;white-space:pre;left:421px;transform-origin:0 50%;transform:scaleX(0.9486);">3 : 0</div>
<div class="t" style="top:465.39px;font-size:13px;line-height:14.52px;color:#000;white-space:pre;font-weight:bold;right:195.5px;transform-origin:100% 50%;transform:scaleX(0.9700);">1.35</div>
<svg style="position:absolute;left:489px;top:470px" width="6" height="11" viewBox="0 0 6 11"><path d="M2.5 0V9.8M0.1 7L2.5 10.1L4.9 7" stroke="#000" stroke-width="1" fill="none"/></svg>
<div class="t" style="top:465.39px;font-size:13px;line-height:14.52px;color:#000;white-space:pre;right:164px;transform-origin:100% 50%;transform:scaleX(0.8200);">5.18</div>
<svg style="position:absolute;left:521px;top:464px" width="6" height="10" viewBox="0 0 6 10"><path d="M2.5 9.4V0.8M0.2 3.6L2.5 0.7L4.8 3.6" stroke="#000" stroke-width="1" fill="none"/></svg>
<div class="t" style="top:465.39px;font-size:13px;line-height:14.52px;color:#000;white-space:pre;right:131.5px;transform-origin:100% 50%;transform:scaleX(0.8200);">9.55</div>
<svg style="position:absolute;left:553px;top:464px" width="6" height="10" viewBox="0 0 6 10"><path d="M2.5 9.4V0.8M0.2 3.6L2.5 0.7L4.8 3.6" stroke="#000" stroke-width="1" fill="none"/></svg>
<div class="t" style="top:465.39px;font-size:13px;line-height:14.52px;color:#000;white-space:pre;right:49.200000000000045px;transform-origin:100% 50%;transform:scaleX(0.7607);">1</div>
<div class="t" style="top:486.39px;font-size:13px;line-height:14.52px;color:#ffffff;white-space:pre;left:15px;transform-origin:0 50%;transform:scaleX(0.8177);">Soccer / ECU - Primera A</div>
<div class="t" style="top:486.39px;font-size:13px;line-height:14.52px;color:#ffffff;white-space:pre;left:171.7px;transform-origin:0 50%;transform:scaleX(0.7995);">-matches: 1</div>
<div class="t" style="top:486.39px;font-size:13px;line-height:14.52px;color:#ffffff;white-space:pre;left:240.5px;transform-origin:0 50%;transform:scaleX(0.7956);">home 1</div>
<div class="t" style="top:486.39px;font-size:13px;line-height:14.52px;color:#ffffff;white-space:pre;left:318.4px;transform-origin:0 50%;transform:scaleX(0.7622);">100% - 0% - 0%</div>
<div style="left:13px;top:492.5px;width:652px;height:26.5px;background:#d5ccbb;border-top:1px solid #fff;"></div>
<div class="fc" style="left:15px;top:494.3px;width:82.5px;height:22.6px"></div>
<div class="fc" style="left:100px;top:494.3px;width:152px;height:22.6px"></div>
<div class="fc" style="left:254px;top:494.3px;width:12px;height:22.6px"></div>
<div class="fc" style="left:268px;top:494.3px;width:134.5px;height:22.6px"></div>
<div class="fc" style="left:583px;top:494.3px;width:81.5px;height:22.6px"></div>
<div class="t" style="top:499.19px;font-size:13px;line-height:14.52px;color:#000;white-space:pre;right:617px;transform-origin:100% 50%;transform:scaleX(0.8298);">26</div>
<div class="t" style="top:499.19px;font-size:13px;line-height:14.52px;color:#000;white-space:pre;left:102.5px;transform-origin:0 50%;transform:scaleX(0.8004);">bal.: 13 - 8 - 5 .. 50% - 31% - 19</div>
<div class="t" style="top:499.19px;font-size:13px;line-height:14.52px;color:#000;white-space:pre;right:52px;transform-origin:100% 50%;transform:scaleX(0.8145);">18.00</div>
<div style="left:665px;top:160px;width:17px;height:359px;background:#fff;"></div>
<div style="left:682px;top:160px;width:17px;height:381px;background:repeating-conic-gradient(#fff 0 25%,#eeeeee 0 50%) 0 0/2px 2px;"></div>
<div class="nb" style="left:682px;top:160px;width:16.5px;height:16px"></div>
<svg style="position:absolute;left:686.7px;top:166px" width="7" height="4" viewBox="0 0 7 4"><path d="M0 4h7L3.5 0z" fill="#000"/></svg>
<div class="nb" style="left:682px;top:176px;width:16.5px;height:100px"></div>
<div class="nb" style="left:682px;top:502px;width:16.5px;height:16.5px"></div>
<svg style="position:absolute;left:686.7px;top:508.5px" width="7" height="4" viewBox="0 0 7 4"><path d="M0 0h7L3.5 4z" fill="#000"/></svg>
<div style="left:13px;top:519px;width:685px;height:22px;background:#f0f0f0;"></div>
<div style="left:357px;top:519px;width:325px;height:21.5px;background:repeating-conic-gradient(#fff 0 25%,#eeeeee 0 50%) 0 0/2px 2px;"></div>
<div class="nb" style="left:357px;top:519px;width:16.5px;height:21px"></div>
<svg style="position:absolute;left:362.5px;top:526px" width="4" height="7" viewBox="0 0 4 7"><path d="M4 0v7L0 3.5z" fill="#8a8a8a"/></svg>
<div class="nb" style="left:665px;top:519px;width:16.5px;height:21px"></div>
<svg style="position:absolute;left:671.5px;top:526px" width="4" height="7" viewBox="0 0 4 7"><path d="M0 0v7L4 3.5z" fill="#8a8a8a"/></svg>
<div class="nb" style="left:13px;top:519px;width:17px;height:21px"></div>
<div class="nb" style="left:30px;top:519px;width:16.5px;height:21px"></div>
<div class="nb" style="left:47px;top:519px;width:16.5px;height:21px"></div>
<div class="nb" style="left:105.5px;top:519px;width:16.5px;height:21px"></div>
<div class="nb" style="left:122.5px;top:519px;width:16.5px;height:21px"></div>
<div class="nb" style="left:139.5px;top:519px;width:16.5px;height:21px"></div>
<div class="nb" style="left:156px;top:519px;width:16.5px;height:21px"></div>
<div class="nb" style="left:173px;top:519px;width:16.5px;height:21px"></div>
<div class="nb" style="left:190px;top:519px;width:16.5px;height:21px"></div>
<div class="nb" style="left:207px;top:519px;width:16.5px;height:21px"></div>
<div class="nb" style="left:224px;top:519px;width:16.5px;height:21px"></div>
<div class="nb" style="left:241px;top:519px;width:21px;height:21px"></div>
<div class="nb" style="left:263px;top:519px;width:21.5px;height:21px"></div>
<div class="nb" style="left:285px;top:519px;width:22px;height:21px"></div>
<div style="left:64px;top:519px;width:41.5px;height:21px;background:#fff;"></div>
<div class="t" style="top:522.89px;font-size:13px;line-height:14.52px;color:#000;white-space:pre;left:70.5px;transform-origin:0 50%;transform:scaleX(0.8761);">1 / 26</div>
<svg style="position:absolute;left:0px;top:519px" width="320" height="22" viewBox="0 0 320 22"><rect x="17" y="6.5" width="1.4" height="7" fill="#333"/><path d="M22.5 6.5v7L18.5 10.0z" fill="#333"/><path d="M26 6.5v7L22 10.0z" fill="#333"/><path d="M38 6.5v7L34 10.0z" fill="#333"/><path d="M42.3 6.5v7L38.3 10.0z" fill="#333"/><path d="M57.5 6.5v7L53.5 10.0z" fill="#333"/><path d="M112 6.5v7L116 10.0z" fill="#333"/><path d="M127 6.5v7L131 10.0z" fill="#333"/><path d="M131.3 6.5v7L135.3 10.0z" fill="#333"/><path d="M142.5 6.5v7L146.5 10.0z" fill="#333"/><path d="M146.3 6.5v7L150.3 10.0z" fill="#333"/><rect x="150.6" y="6.5" width="1.4" height="7" fill="#333"/><rect x="159.5" y="9.7" width="10" height="1.3" fill="#9a9a9a"/><path d="M177.2 12.6c-.4-4.6 5.4-6 7-2" stroke="#222" stroke-width="1.6" fill="none"/><path d="M181.6 10.6l5-.8l-1.4 4.6z" fill="#222"/><path d="M198.4 6v9.4M193.7 10.7h9.4M195 7.3l6.8 6.8M201.8 7.3l-6.8 6.8" stroke="#000" stroke-width="1.25"/><path d="M216.2 6.6v8.8M211.8 11h8.8M213 7.8l6.4 6.4M219.4 7.8l-6.4 6.4" stroke="#9a9a9a" stroke-width="1.15"/><path d="M209.8 5.6v3.8l2.4-1.9z" fill="#9a9a9a"/><path d="M229.4 8h7l-2.2 2.4v3.4h-2.6v-3.4z" fill="#f08000"/><rect x="229" y="6.6" width="7.8" height="1.9" fill="#f8a020"/></svg>
<svg style="position:absolute;left:243px;top:521.5px" width="18" height="17" viewBox="0 0 18 17"><circle cx="8.8" cy="8.6" r="7.6" fill="#f6d4d0" stroke="#b83028" stroke-width="1.1"/><circle cx="8.8" cy="8.6" r="5.6" fill="#fff" stroke="#c83830" stroke-width="1.7"/><path d="M6 8.2h3.4v3.6" stroke="#c02820" stroke-width="1.5" fill="none"/></svg>
<svg style="position:absolute;left:266px;top:522px" width="17" height="17" viewBox="0 0 17 17"><rect x="1.4" y=".8" width="11" height="12.6" fill="#f4f7fd" stroke="#7c9cdc" stroke-width="1.2"/><circle cx="10.6" cy="10.6" r="5" fill="#68c048" stroke="#2f7d20" stroke-width="1"/><path d="M10.6 7.8v5.6M7.8 10.6h5.6" stroke="#fff" stroke-width="1.7"/></svg>
<svg style="position:absolute;left:288px;top:521.5px" width="17" height="17" viewBox="0 0 17 17"><path d="M4.6 13.4a6 6 0 1 1 8.4-.6" stroke="#3c8818" stroke-width="4.4" fill="none"/><path d="M4.6 13.4a6 6 0 1 1 8.4-.6" stroke="#94d44c" stroke-width="2.6" fill="none"/><path d="M8.8 11.2h7.6l-3.8 5.6z" fill="#84c840" stroke="#3c8818" stroke-width=".9"/></svg>
<div style="left:8px;top:545px;width:696px;height:1px;background:#fff;"></div>
<div style="left:8px;top:544px;width:696px;height:1px;background:#d0d0d0;"></div>
<div style="left:8px;top:572px;width:696px;height:1px;background:#a0a0a0;"></div>
<div style="left:8px;top:573px;width:696px;height:1px;background:#fff;"></div>
<div class="cmb" style="left:10.5px;top:548px;width:77px;height:21px"></div>
<div class="t" style="top:553.48px;font-size:11px;line-height:12.29px;color:#000;white-space:pre;left:13px;transform-origin:0 50%;transform:scaleX(0.9171);">FILTER</div>
<svg style="position:absolute;left:75.5px;top:557px" width="8" height="6" viewBox="0 0 8 6"><path d="M0.7 0.7L4 4.6L7.3 0.7" stroke="#404040" stroke-width="1.9" fill="none"/></svg>
<svg style="position:absolute;left:94.5px;top:551px" width="17" height="16" viewBox="0 0 17 16"><path d="M1.4 9.4L6 14L15.6 3.2" stroke="#1a1a9a" stroke-width="2.6" fill="none"/><path d="M1.4 8.2L6 12.8L15.6 2" stroke="#18a018" stroke-width="2.7" fill="none"/></svg>
<div class="btn" style="left:120.5px;top:548.5px;width:226.5px;height:21px"></div>
<div class="t" style="top:553.18px;font-size:11px;line-height:12.29px;color:#000;white-space:pre;left:211px;transform-origin:0 50%;transform:scaleX(0.9447);">sample</div>
<svg style="position:absolute;left:247.5px;top:557.5px" width="8" height="4" viewBox="0 0 8 4"><path d="M0 0h8L4 4z" fill="#000"/></svg>
<svg style="position:absolute;left:354.7px;top:554.4px" width="17" height="10" viewBox="0 0 17 10"><path d="M0.7 5L9.6 1.2L8 3.6H16.1V6.4H8L9.6 8.8z" fill="#ff0000" stroke="#1a0000" stroke-width=".7" stroke-linejoin="round"/></svg>
<svg style="position:absolute;left:683px;top:554.4px" width="17" height="10" viewBox="0 0 17 10"><path d="M0.7 5L9.6 1.2L8 3.6H16.1V6.4H8L9.6 8.8z" fill="#ff0000" stroke="#1a0000" stroke-width=".7" stroke-linejoin="round"/></svg>
<svg style="position:absolute;left:378px;top:550px" width="17" height="17" viewBox="0 0 17 17"><path d="M8.5 .6L14 6.8L8.5 12.6L3 6.8z" fill="#fff23a"/><path d="M1.2 15L4.4 6.8L8.5 9.8L12.6 6.8L15.8 15L8.5 15.8z" fill="#fff" stroke="#111" stroke-width="1" stroke-linejoin="round"/><path d="M8.5 9.8V15.6" stroke="#111" stroke-width="1"/><path d="M2.6 13.4L7.4 14.2M14.4 13.4L9.6 14.2" stroke="#555" stroke-width=".7"/><path d="M.8 16.3H7l1.5 .6l1.5-.6h6.2" stroke="#1030e0" stroke-width="1.3" fill="none"/><text x="8.6" y="12" font-family="Liberation Sans" font-size="13.5" font-weight="bold" fill="#f00000" stroke="#f00000" stroke-width=".5" text-anchor="middle">?</text></svg>
<div style="left:404px;top:553px;width:13px;height:13px;background:#fff;border:1px solid #707070"></div>
<div class="t" style="top:554.38px;font-size:11px;line-height:12.29px;color:#000;white-space:pre;left:420px;transform-origin:0 50%;transform:scaleX(0.9665);">Competitions:</div>
<div class="btn" style="left:497px;top:548.5px;width:166px;height:21px"></div>
<div class="t" style="top:553.18px;font-size:11px;line-height:12.29px;color:#000;white-space:pre;left:502px;transform-origin:0 50%;transform:scaleX(0.9642);">Competition from main window</div>
<svg style="position:absolute;left:651px;top:557.5px" width="8" height="4" viewBox="0 0 8 4"><path d="M0 0h8L4 4z" fill="#000"/></svg>
<div style="left:8px;top:574px;width:696px;height:19px;background:#f2f2f2;"></div>
<div class="cmb" style="left:8.5px;top:573.5px;width:122px;height:20px"></div>
<div class="t" style="top:578.28px;font-size:11px;line-height:12.29px;color:#000;white-space:pre;left:11px;transform-origin:0 50%;transform:scaleX(0.9476);">Pinnacle Sports</div>
<svg style="position:absolute;left:118.5px;top:582px" width="8" height="6" viewBox="0 0 8 6"><path d="M0.7 0.7L4 4.6L7.3 0.7" stroke="#404040" stroke-width="1.9" fill="none"/></svg>
<div class="t" style="top:577.98px;font-size:11px;line-height:12.29px;color:#000;white-space:pre;left:151px;transform-origin:0 50%;transform:scaleX(1.0206);">47-33-19  1.4:0.9</div>
<div class="t" style="top:577.98px;font-size:11px;line-height:12.29px;color:#000;white-space:pre;left:292.5px;transform-origin:0 50%;transform:scaleX(1.0948);">... [2.58]</div>
<div class="t" style="top:577.98px;font-size:11px;line-height:12.29px;color:#000;white-space:pre;left:387px;transform-origin:0 50%;transform:scaleX(0.9425);">Coupons</div>
<div class="t" style="top:577.98px;font-size:11px;line-height:12.29px;color:#000;white-space:pre;left:471px;transform-origin:0 50%;transform:scaleX(1.0723);">Offer</div>
<svg style="position:absolute;left:500px;top:581.8px" width="8" height="4" viewBox="0 0 8 4"><path d="M0 0h8L4 4z" fill="#000"/></svg>
<div class="t" style="top:579.18px;font-size:11px;line-height:12.29px;color:#000;white-space:pre;left:538.7px;transform-origin:0 50%;transform:scaleX(0.9236);">12</div>
<div class="t" style="top:577.98px;font-size:11px;line-height:12.29px;color:#000;white-space:pre;left:595px;transform-origin:0 50%;">22:27</div>
<div class="t" style="top:577.98px;font-size:11px;line-height:12.29px;color:#000;white-space:pre;left:635px;transform-origin:0 50%;transform:scaleX(0.9592);">Online</div>
<svg style="position:absolute;left:667.5px;top:581.8px" width="8" height="4" viewBox="0 0 8 4"><path d="M0 0h8L4 4z" fill="#000"/></svg>
<div style="left:370px;top:577px;width:1px;height:15px;background:#d7d7d7;"></div>
<div style="left:445px;top:577px;width:1px;height:15px;background:#d7d7d7;"></div>
<div style="left:561px;top:577px;width:1px;height:15px;background:#d7d7d7;"></div>
<div style="left:586px;top:577px;width:1px;height:15px;background:#d7d7d7;"></div>
<div style="left:628.5px;top:577px;width:1px;height:15px;background:#d7d7d7;"></div>
<div style="left:446px;top:576px;width:80px;height:1px;background:#d0d0d0;"></div>
<svg style="position:absolute;left:569px;top:577px" width="14" height="14" viewBox="0 0 14 14"><circle cx="7" cy="7" r="6" fill="#ffff00" stroke="#222" stroke-width="1"/></svg>
<svg style="position:absolute;left:693px;top:582px" width="11" height="11" viewBox="0 0 11 11"><rect x="7.5" y="1.3" width="2.2" height="2.2" fill="#b2b2b2"/><rect x="4.4" y="4.5" width="2.2" height="2.2" fill="#b2b2b2"/><rect x="7.5" y="4.5" width="2.2" height="2.2" fill="#b2b2b2"/><rect x="1.3" y="7.7" width="2.2" height="2.2" fill="#b2b2b2"/><rect x="4.4" y="7.7" width="2.2" height="2.2" fill="#b2b2b2"/><rect x="7.5" y="7.7" width="2.2" height="2.2" fill="#b2b2b2"/></svg>
<svg style="position:absolute;left:645px;top:512px" width="13" height="20" viewBox="0 0 13 20"><path d="M1 1v15l3.6-3.4l2.6 6l2.2-1l-2.6-5.8h5z" fill="#fff" stroke="#000" stroke-width="1"/></svg>
<svg style="position:absolute;left:111px;top:57px" width="16" height="16" viewBox="0 0 16 16"><rect x="5" y="3" width="9" height="1" fill="#222"/><rect x="5" y="8" width="9" height="1" fill="#222"/><rect x="5" y="13" width="9" height="1" fill="#222"/><path d="M1.4 2.2l1-.8v3.4M1 7.2c.8-1.2 2.4-.6 1.6 .6l-1.6 2h2.2M1 11.6h2l-1.2 1.4c1.4-.2 1.6 2-.8 1.8" stroke="#3a78e0" stroke-width=".9" fill="none"/></svg>
<svg style="position:absolute;left:177px;top:58px" width="14" height="14" viewBox="0 0 14 14"><rect x=".5" y=".5" width="13" height="13" fill="#eef2fb" stroke="#6a96dc"/><rect x="2" y="2" width="10" height="2.6" fill="#f89848"/><rect x="2" y="2.8" width="10" height=".8" fill="#fcc090"/><rect x="2" y="4.6" width="1.6" height="7.4" fill="#f89848"/><rect x="3.6" y="4.6" width=".9" height="7.4" fill="#58a848"/><rect x="4.5" y="4.6" width="7.5" height="7.4" fill="#dfe8f8"/><path d="M6.5 4.6v7.4M8.5 4.6v7.4M10.5 4.6v7.4M4.5 6.6h7.5M4.5 8.6h7.5M4.5 10.6h7.5" stroke="#fff" stroke-width=".6"/><rect x="4.6" y="8" width="2.6" height="2.6" fill="#58a848"/><rect x="8" y="6" width="2.6" height="2.6" fill="#58a848"/></svg>
<svg style="position:absolute;left:241px;top:58px" width="16" height="15" viewBox="0 0 16 15"><path d="M1.1 1.5H8.6V5.6H1.1M8.6 3.5H14.8M1.1 9.6H8.6V13.5H1.1M8.6 11.5H14.8" stroke="#222" stroke-width="1" fill="none"/></svg>
<svg style="position:absolute;left:305px;top:58px" width="15" height="13" viewBox="0 0 15 13"><rect x=".5" y=".5" width="14" height="12" fill="#fff" stroke="#2f6fd0"/><rect x=".5" y=".5" width="14" height="2.4" fill="#2f6fd0"/><rect x="2.2" y="4" width="3" height="3" fill="#8a6fd0"/><rect x="6" y="4" width="3" height="3" fill="#2f6fd0"/><rect x="9.8" y="4" width="3" height="3" fill="#3aa03a"/><rect x="2.2" y="8" width="3" height="3" fill="#f06030"/><rect x="6" y="8" width="3" height="3" fill="#2f6fd0"/><rect x="9.8" y="8" width="3" height="3" fill="#e8a020"/></svg>
<svg style="position:absolute;left:364px;top:56px" width="18" height="18" viewBox="0 0 18 18"><path d="M1.4 14.4c.6 2 2.6 2.4 4.2 1.6c1.8-.8 2.4-.6 3.6-1.8c1-1 2.6-1.6 6.6-1.8" stroke="#2040c0" stroke-width="1.1" fill="none"/><path d="M3.4 10.8L12.2 1.8L15.8 5L6.6 13.6z" fill="#c8281c" stroke="#4a0c06" stroke-width=".9" stroke-linejoin="round"/><path d="M4.8 12.2L14 3.4" stroke="#7a140c" stroke-width="1.1"/><path d="M12.2 1.8l1.2-1l3.4 3l-1 1.2z" fill="#f09090" stroke="#4a0c06" stroke-width=".6"/><path d="M3.4 10.8L1.8 14.6L6.6 13.6z" fill="#f0d8a0" stroke="#4a0c06" stroke-width=".6"/><path d="M1.8 14.6l1.4-.4l-.8-1z" fill="#222"/></svg>
<svg style="position:absolute;left:415px;top:56.5px" width="16" height="17" viewBox="0 0 16 17"><path d="M1.2 15.5L7 9" stroke="#e89030" stroke-width="2.6" stroke-linecap="round"/><path d="M1.2 15.5L7 9" stroke="#f8c880" stroke-width="1" stroke-linecap="round"/><circle cx="10" cy="6" r="4.8" fill="#dcecfa" stroke="#9ab8d8" stroke-width="1.3"/><path d="M10 3.2v5.6M7.2 6h5.6" stroke="#e03020" stroke-width="1.5"/></svg>
<svg style="position:absolute;left:478px;top:59px" width="18" height="15" viewBox="0 0 18 15"><path d="M1.6 2.2c0-.8 .4-1.2 1.2-1.2h3.4c.8 0 1 .4 1.4 1.2h4c.8 0 1.2 .4 1.2 1.2v7.6H1.6z" fill="#dcdcdc" stroke="#5c5c5c" stroke-width="1"/><path d="M3.4 4.8c0-.8 .4-1.2 1.2-1.2h3.2c.8 0 1 .4 1.4 1.2h4.2c.8 0 1.2 .4 1.2 1.2v6.4H3.4z" fill="#e4e4e4" stroke="#5c5c5c" stroke-width="1"/><path d="M5.4 7.6c0-.8 .4-1.2 1.2-1.2h8.8c.8 0 1.2 .4 1.2 1.2v5.2c0 .8-.4 1.2-1.2 1.2H6.6c-.8 0-1.2-.4-1.2-1.2z" fill="#eeeeee" stroke="#5c5c5c" stroke-width="1"/></svg>
<svg style="position:absolute;left:554px;top:57px" width="18" height="18" viewBox="0 0 18 18"><path d="M1 3.5v9.5c0 1.4 2 2.3 4.8 2.3s4.8-0.9 4.8-2.3V3.5" fill="#d8d8d8" stroke="#909090" stroke-width="1"/><ellipse cx="5.8" cy="3.5" rx="4.8" ry="2.3" fill="#f0f0f0" stroke="#909090" stroke-width="1"/><path d="M1 8.2c0 1.4 2 2.3 4.8 2.3s4.8-0.9 4.8-2.3" fill="none" stroke="#a8a8a8" stroke-width=".8"/><path d="M10.8 7.2h3v3h3v3h-3v3h-3v-3h-3v-3h3z" fill="#4a4a4a" stroke="#2a2a2a" stroke-width=".6"/></svg>
<svg style="position:absolute;left:11.5px;top:87.5px" width="18" height="18" viewBox="-9 -9 18 18"><defs><linearGradient id="gg20" x1="0" y1="0" x2="0" y2="1"><stop offset="0" stop-color="#8fe05a"/><stop offset=".5" stop-color="#3fb41c"/><stop offset="1" stop-color="#2a8a10"/></linearGradient></defs><circle r="7.8" fill="url(#gg20)" stroke="#2e8414" stroke-width="1"/><ellipse cx="0" cy="-3.8" rx="5.2" ry="3" fill="#fff" opacity=".28"/><path d="M4 0H-3M-0.2 -3.2L-3.6 0L-0.2 3.2" stroke="#fff" stroke-width="2.2" fill="none" stroke-linecap="round" stroke-linejoin="round"/></svg>
<svg style="position:absolute;left:114.7px;top:87.5px" width="18" height="18" viewBox="-9 -9 18 18"><defs><linearGradient id="gg123" x1="0" y1="0" x2="0" y2="1"><stop offset="0" stop-color="#8fe05a"/><stop offset=".5" stop-color="#3fb41c"/><stop offset="1" stop-color="#2a8a10"/></linearGradient></defs><circle r="7.8" fill="url(#gg123)" stroke="#2e8414" stroke-width="1"/><ellipse cx="0" cy="-3.8" rx="5.2" ry="3" fill="#fff" opacity=".28"/><path d="M-4 0H3M0.2 -3.2L3.6 0L0.2 3.2" stroke="#fff" stroke-width="2.2" fill="none" stroke-linecap="round" stroke-linejoin="round"/></svg>
<svg style="position:absolute;left:138.7px;top:87.5px" width="18" height="18" viewBox="-9 -9 18 18"><defs><linearGradient id="gg147" x1="0" y1="0" x2="0" y2="1"><stop offset="0" stop-color="#8fe05a"/><stop offset=".5" stop-color="#3fb41c"/><stop offset="1" stop-color="#2a8a10"/></linearGradient></defs><circle r="7.8" fill="url(#gg147)" stroke="#2e8414" stroke-width="1"/><ellipse cx="0" cy="-3.8" rx="5.2" ry="3" fill="#fff" opacity=".28"/><path d="M4 0H-3M-0.2 -3.2L-3.6 0L-0.2 3.2" stroke="#fff" stroke-width="2.2" fill="none" stroke-linecap="round" stroke-linejoin="round"/></svg>
<svg style="position:absolute;left:242.2px;top:87.5px" width="18" height="18" viewBox="-9 -9 18 18"><defs><linearGradient id="gg251" x1="0" y1="0" x2="0" y2="1"><stop offset="0" stop-color="#8fe05a"/><stop offset=".5" stop-color="#3fb41c"/><stop offset="1" stop-color="#2a8a10"/></linearGradient></defs><circle r="7.8" fill="url(#gg251)" stroke="#2e8414" stroke-width="1"/><ellipse cx="0" cy="-3.8" rx="5.2" ry="3" fill="#fff" opacity=".28"/><path d="M-4 0H3M0.2 -3.2L3.6 0L0.2 3.2" stroke="#fff" stroke-width="2.2" fill="none" stroke-linecap="round" stroke-linejoin="round"/></svg>
<div style="left:262px;top:86px;width:18.5px;height:21px;background:#c4dcf6;border:1px solid #5a9ce8"></div>
<svg style="position:absolute;left:262px;top:87.5px" width="18" height="18" viewBox="-9 -9 18 18"><defs><linearGradient id="bg271" x1="0" y1="0" x2="0" y2="1"><stop offset="0" stop-color="#4a9af0"/><stop offset="1" stop-color="#0a50c8"/></linearGradient></defs><circle r="7.4" fill="#2a78e0" stroke="#1448a8" stroke-width="1"/><circle r="5.9" fill="#fff"/><circle r="4.9" fill="url(#bg271)"/><rect x="-2.9" y="-2.8" width="1.6" height="5.6" fill="#fff"/><path d="M2.7 -3V3L-1.3 0z" fill="#fff"/></svg>
<svg style="position:absolute;left:358px;top:87.5px" width="18" height="18" viewBox="-9 -9 18 18"><defs><linearGradient id="bg367" x1="0" y1="0" x2="0" y2="1"><stop offset="0" stop-color="#4a9af0"/><stop offset="1" stop-color="#0a50c8"/></linearGradient></defs><circle r="7.4" fill="#2a78e0" stroke="#1448a8" stroke-width="1"/><circle r="5.9" fill="#fff"/><circle r="4.9" fill="url(#bg367)"/><rect x="1.3" y="-2.8" width="1.6" height="5.6" fill="#fff"/><path d="M-2.7 -3V3L1.3 0z" fill="#fff"/></svg>
<svg style="position:absolute;left:385px;top:88px" width="14" height="16" viewBox="0 0 14 16"><path d="M.6 .6H10L13.4 4V15.4H.6z" fill="#fff" stroke="#000" stroke-width="1.1"/><path d="M10 .6V4H13.4" fill="none" stroke="#000" stroke-width="1"/><rect x="1.4" y="1.8" width="8" height="1.1" fill="#e00000"/><path d="M3.5 4.5V8.5H1.5V7.5M5.5 9V5.5H7.5V9M5.5 7.5H7.5M9.5 9V4.5L11.5 9V4.5M6.5 10.5V14M5 14.5H8.5M5.2 11.5L6.5 10.6" fill="none" stroke="#000" stroke-width="1"/></svg>
<svg style="position:absolute;left:410px;top:88px" width="17" height="16" viewBox="0 0 17 16"><path d="M1.4 9.4L6 14L15.6 3.2" stroke="#1a1a9a" stroke-width="2.6" fill="none"/><path d="M1.4 8.2L6 12.8L15.6 2" stroke="#18a018" stroke-width="2.7" fill="none"/></svg>
<svg style="position:absolute;left:439.5px;top:89px" width="15" height="14.5" viewBox="0 0 15 14.5"><defs><linearGradient id="eg" x1="0" y1="0" x2="0" y2="1"><stop offset="0" stop-color="#8ee060"/><stop offset="1" stop-color="#3cae24"/></linearGradient></defs><rect x=".5" y=".5" width="14" height="13.5" rx="2.5" fill="url(#eg)" stroke="#3c9c24"/><path d="M11 4.2c-3-2-6.2-0.2-6.2 3s3.2 5 6.2 3M3.2 6.2h5.6M3.2 8.2h5.6" stroke="#fff" stroke-width="1.5" fill="none"/></svg>
<svg style="position:absolute;left:467.5px;top:87.5px" width="16" height="16" viewBox="0 0 16 16"><path d="M1 9.6l1.2-1.4l-.2-1.2l1.8-.6l.8-1l1.6 .2h3.6l1.6-.2l.8 1l1.8 .6l-.2 1.2l1.2 1.4l-1 1.4l.2 1.4l-1.8 .4l-.8 1.2l-1.6-.4l-1.4 1l-1.4-.8l-1.6 .8l-1.2-1.2l-1.8-.2l-.2-1.6l-1.4-.8z" fill="#e0b020" stroke="#b88a10" stroke-width=".6"/><ellipse cx="7.6" cy="9.8" rx="4.6" ry="2.6" fill="#f4d868"/><rect x="5" y=".6" width="5" height="9.4" rx="1.8" fill="#9c9c9c" stroke="#6a6a6a" stroke-width=".7"/><rect x="6" y="1.4" width="1.5" height="7.8" fill="#dedede"/></svg>
<svg style="position:absolute;left:494.5px;top:88px" width="14" height="16" viewBox="0 0 14 16"><path d="M.6 .6H8.4L11.8 4V15.2H.6z" fill="#e2eafa" stroke="#8ea8dc" stroke-width="1"/><path d="M8.4 .6V4H11.8" fill="#fff" stroke="#8ea8dc" stroke-width=".9"/><rect x="2.8" y="6.8" width="7" height="6.8" fill="#fff" stroke="#1838a8" stroke-width="1.5"/><path d="M4.4 9.6L6.2 12L8.2 8.4L12.6 4" stroke="#f02010" stroke-width="1.5" fill="none"/></svg>
<svg style="position:absolute;left:521.5px;top:87.5px" width="16" height="17" viewBox="0 0 16 17"><path d="M1.2 15.5L7 9" stroke="#e89030" stroke-width="2.6" stroke-linecap="round"/><path d="M1.2 15.5L7 9" stroke="#f8c880" stroke-width="1" stroke-linecap="round"/><circle cx="10" cy="6" r="4.8" fill="#dcecfa" stroke="#9ab8d8" stroke-width="1.3"/><path d="M10 3.2v5.6M7.2 6h5.6" stroke="#e03020" stroke-width="1.5"/></svg>
<svg style="position:absolute;left:388px;top:113px" width="16" height="16" viewBox="0 0 16 16"><rect x="0" y="0" width="16" height="16" fill="#10183a"/><rect x="0" y="0" width="14.6" height="14.6" fill="#dde4f4"/><rect x="0" y="0" width="14.6" height="1" fill="#b4c4ec"/><rect x="0" y="0" width="1" height="14.6" fill="#b4c4ec"/><rect x=".4" y="7" width="7.6" height="7.6" fill="#86b848" stroke="#5c9428" stroke-width=".8"/><rect x="2" y="8.6" width="4.4" height="4.4" fill="#a8d070"/><path d="M5.2 2.2L8.2 5.2H2.2z" fill="#5a6a90"/><path d="M10 6.8L13 10L10 13.2z" fill="#5a6a90"/></svg>
<svg style="position:absolute;left:417px;top:115px" width="17" height="12" viewBox="0 0 17 12"><rect x="0" y="1.6" width="3" height="8.6" fill="#000"/><rect x="3.2" y="2.4" width="1.1" height="6.6" fill="#20c8e0"/><path d="M4.8 2.4H7.4L8.6 1H11c1 0 1 1.6 .2 1.8H15.2c1.2 0 1.2 2 0 2H11.6c1.4 .4 1.2 1.6 -.2 1.8c1.2 .4 1 1.6 -.4 1.8c.8 .6 .4 1.6 -1 1.6H4.8z" fill="#fff060" stroke="#000" stroke-width=".9"/></svg>
<svg style="position:absolute;left:136px;top:134px" width="18" height="18" viewBox="0 0 18 18"><defs><pattern id="dp" width="2" height="2" patternUnits="userSpaceOnUse"><rect width="2" height="2" fill="#cfe6ff"/><rect width="1" height="1" fill="#2f8cff"/><rect x="1" y="1" width="1" height="1" fill="#2f8cff"/></pattern></defs><path d="M1.4 15.4L7.2 10.4" stroke="#3b8cf0" stroke-width="2.6" stroke-linecap="round"/><path d="M1.6 15.2L7 10.6" stroke="#f0a040" stroke-width="1" stroke-dasharray="1 1"/><path d="M10.5 1l2 .8l1.8-.4l.8 1.8l1.4 1.2l-.6 1.8l.4 1.8l-1.8 1l-.8 1.8l-2-.2l-1.8 1l-1.4-1.4l-1.8-.4l-.2-2l-1-1.6l1.2-1.6l.2-2l1.8-.6z" fill="url(#dp)"/></svg>
</body></html>
